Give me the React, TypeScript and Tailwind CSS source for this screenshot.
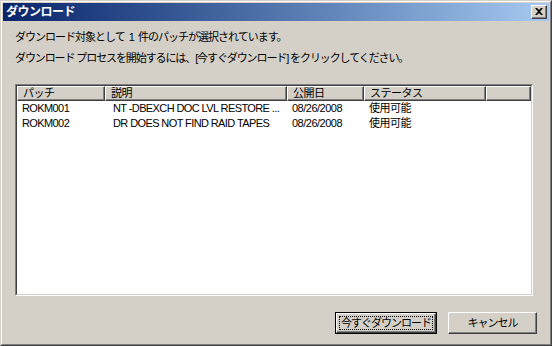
import React from "react";

const font = { fontFamily: '"Liberation Sans", "Noto Sans CJK JP", sans-serif' };

function HeaderCell({ w, children }: { w: string; children?: React.ReactNode }) {
  return (
    <div
      className={`${w} h-[15px] shrink-0 bg-[#d4d0c8] border-t border-l border-t-white border-l-white border-r border-b border-r-[#404040] border-b-[#404040] shadow-[inset_-1px_-1px_0_#808080] pl-[5px] text-[11px] leading-[13px] text-black overflow-hidden whitespace-nowrap tracking-[-0.5px]`}
    >
      {children}
    </div>
  );
}

function Row({ a, b, c, d }: { a: string; b: string; c: string; d: string }) {
  return (
    <div className="flex h-[15px] items-center text-[11px] leading-[15px] text-black whitespace-nowrap">
      <div className="w-[88px] shrink-0 pl-[5px] tracking-[-0.6px]">{a}</div>
      <div className="w-[182px] shrink-0 pl-[8px] overflow-hidden tracking-[-0.6px]">{b}</div>
      <div className="w-[77px] shrink-0 pl-[5px] tracking-[-0.5px]">{c}</div>
      <div className="w-[122px] shrink-0 pl-[5px] tracking-[-0.5px]">{d}</div>
    </div>
  );
}

export default function App() {
  return (
    <div style={font} className="w-[552px] h-[346px] bg-[#d4d0c8] select-none">
      <div className="w-full h-full border border-t-[#d4d0c8] border-l-[#d4d0c8] border-r-[#404040] border-b-[#404040]">
        <div className="w-full h-full border border-t-white border-l-white border-r-[#808080] border-b-[#808080] p-px flex flex-col">
          {/* Title bar */}
          <div className="h-[18px] shrink-0 flex items-center justify-between bg-gradient-to-r from-[#0a246a] to-[#a6caf0] pl-[3px] pr-[2px]">
            <span className="text-white font-bold text-[12px] leading-[18px] tracking-[-0.5px]">ダウンロード</span>
            <div className="w-[16px] h-[14px] bg-[#d4d0c8] border border-t-white border-l-white border-r-[#404040] border-b-[#404040] shadow-[inset_-1px_-1px_0_#808080] flex items-center justify-center">
              <svg width="8" height="7" viewBox="0 0 8 7" className="mb-px">
                <path d="M0 0h2l2 2 2-2h2L5 3.5 8 7H6L4 5 2 7H0l3-3.5z" fill="#000" />
              </svg>
            </div>
          </div>

          {/* Body */}
          <div className="flex-1 flex flex-col px-[12px] pt-[10px]">
            <div className="text-[11px] leading-[13px] text-black tracking-[-1px] h-[21px] whitespace-pre">
              {"ダウンロード対象として  1  件のパッチが選択されています。"}
            </div>
            <div className="text-[11px] leading-[13px] text-black tracking-[-1.1px] h-[32px] whitespace-pre">
              {"ダウンロード プロセスを開始するには、[今すぐダウンロード] をクリックしてください。"}
            </div>

            {/* List view */}
            <div className="w-[518px] h-[212px] shrink-0 border border-t-[#808080] border-l-[#808080] border-r-white border-b-white">
              <div className="w-full h-full border border-t-[#404040] border-l-[#404040] border-r-[#d4d0c8] border-b-[#d4d0c8] bg-white flex flex-col">
                <div className="flex">
                  <HeaderCell w="w-[88px]">パッチ</HeaderCell>
                  <HeaderCell w="w-[182px]">説明</HeaderCell>
                  <HeaderCell w="w-[77px]">公開日</HeaderCell>
                  <HeaderCell w="w-[122px]">ステータス</HeaderCell>
                  <HeaderCell w="flex-1"></HeaderCell>
                </div>
                <Row a="ROKM001" b="NT -DBEXCH DOC LVL RESTORE ..." c="08/26/2008" d="使用可能" />
                <Row a="ROKM002" b="DR DOES NOT FIND RAID TAPES" c="08/26/2008" d="使用可能" />
              </div>
            </div>

            {/* Buttons */}
            <div className="flex justify-end gap-[11px] mt-[16px]">
              <div className="w-[102px] h-[22px] border border-black">
                <div className="w-full h-full bg-[#d4d0c8] border border-t-white border-l-white border-r-[#404040] border-b-[#404040] shadow-[inset_-1px_-1px_0_#808080] p-[2px]">
                  <div className="w-full h-full border border-dotted border-black flex items-center justify-center text-[11px] text-black tracking-[-1px] leading-none">
                    今すぐダウンロード
                  </div>
                </div>
              </div>
              <div className="w-[89px] h-[22px] bg-[#d4d0c8] border border-t-white border-l-white border-r-[#404040] border-b-[#404040] shadow-[inset_-1px_-1px_0_#808080] flex items-center justify-center text-[11px] text-black tracking-[-1px] leading-none">
                キャンセル
              </div>
            </div>
          </div>
        </div>
      </div>
    </div>
  );
}
